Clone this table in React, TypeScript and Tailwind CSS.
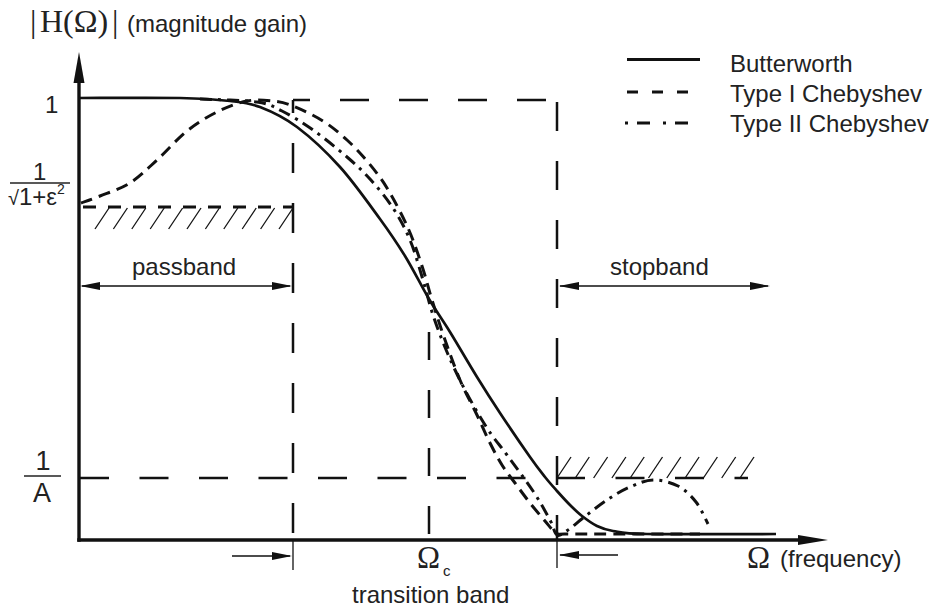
import React from 'react';

type Pt = [number, number];

// Catmull-Rom through the points, as cubic beziers
const smooth = (pts: Pt[]) => {
  let d = `M${pts[0][0]},${pts[0][1]}`;
  for (let i = 0; i < pts.length - 1; i++) {
    const p0 = pts[i - 1] || pts[i];
    const p1 = pts[i];
    const p2 = pts[i + 1];
    const p3 = pts[i + 2] || p2;
    const c1x = p1[0] + (p2[0] - p0[0]) / 6;
    const c1y = p1[1] + (p2[1] - p0[1]) / 6;
    const c2x = p2[0] - (p3[0] - p1[0]) / 6;
    const c2y = p2[1] - (p3[1] - p1[1]) / 6;
    d += ` C${c1x.toFixed(1)},${c1y.toFixed(1)} ${c2x.toFixed(1)},${c2y.toFixed(1)} ${p2[0]},${p2[1]}`;
  }
  return d;
};

const butterworth: Pt[] = [
  [79, 98], [180, 98], [230, 101], [260, 107], [297, 127], [340, 167], [380, 219],
  [405, 256], [429, 299], [450, 332], [477, 377], [500, 413], [530, 457], [545, 477],
  [557, 491], [570, 505], [582, 516], [597, 526], [613, 531], [647, 534], [776, 534],
];

const chebyshev1: Pt[] = [
  [81, 203], [100, 196], [130, 183], [157, 160], [187, 131], [217, 112], [247, 101],
  [273, 101], [293, 106], [323, 121], [347, 140], [367, 161], [387, 188], [408, 228],
  [422, 266], [432, 300], [444, 337], [460, 380], [477, 415], [490, 443], [502, 465],
  [515, 483], [530, 503], [545, 521], [556, 533], [566, 534], [613, 534], [700, 534],
];

const chebyshev2: Pt[] = [
  [200, 99], [257, 102], [282, 111], [313, 130], [347, 157], [370, 179], [393, 208],
  [410, 240], [423, 280], [433, 315], [447, 352], [465, 390], [487, 428], [507, 455],
  [533, 491], [550, 520], [557, 535], [568, 530], [583, 518], [607, 500], [630, 487],
  [653, 480], [678, 486], [696, 502], [708, 524],
];

const ink = '#111';
const text = '#222';
const sans = '"Liberation Sans", Arial, sans-serif';
const serif = '"Liberation Serif", "Times New Roman", serif';

const head = (tx: number, ty: number, dir: 1 | -1) =>
  `${tx},${ty} ${tx - dir * 20},${ty - 4} ${tx - dir * 20},${ty + 4}`;

const passHatch = Array.from({ length: 11 }, (_, i) => 95 + i * 18.4);
const stopHatch = Array.from({ length: 11 }, (_, i) => 557 + i * 18.3);

const App: React.FC = () => {
  return (
    <div className="w-[937px] h-[610px] bg-white overflow-hidden">
      <svg width={937} height={610} viewBox="0 0 937 610" className="block">
        {/* reference lines */}
        <g stroke={ink} strokeWidth={2.5} fill="none">
          <line x1={293} y1={100} x2={557} y2={100} strokeDasharray="29 30" strokeDashoffset={12} />
          <line x1={293} y1={100} x2={293} y2={540} strokeDasharray="30 30" strokeDashoffset={17} />
          <line x1={557} y1={102} x2={557} y2={540} strokeDasharray="29 30" />
          <line x1={429} y1={332} x2={429} y2={540} strokeDasharray="28 30" />
          <line x1={80} y1={478} x2={748} y2={478} strokeDasharray="29 30.5" />
          <line x1={83} y1={207} x2={293} y2={207} strokeWidth={3} strokeDasharray="13 12" />
        </g>

        {/* hatching */}
        <g stroke={ink} strokeWidth={1.3}>
          {passHatch.map((x) => (
            <line key={x} x1={x} y1={229} x2={x + 14} y2={208} />
          ))}
          {stopHatch.map((x) => (
            <line key={x} x1={x} y1={478} x2={x + 14} y2={457} />
          ))}
        </g>

        {/* response curves */}
        <g fill="none" stroke={ink} strokeWidth={3}>
          <path d={smooth(chebyshev2)} strokeDasharray="12 6 3 6" />
          <path d={smooth(chebyshev1)} strokeDasharray="12 7" />
          <path d={smooth(butterworth)} strokeWidth={2.7} />
        </g>

        {/* axes */}
        <line x1={79} y1={80} x2={79} y2={541.7} stroke={ink} strokeWidth={3.4} />
        <line x1={77.3} y1={540} x2={802} y2={540} stroke={ink} strokeWidth={3.4} />
        <polygon points="79,52 73.5,83 84.5,83" fill={ink} />
        <polygon points="828,540 798,535 798,545" fill={ink} />

        {/* dimension arrows */}
        <g stroke={ink} strokeWidth={1.3}>
          <line x1={82} y1={286} x2={290} y2={286} />
          <line x1={560} y1={286} x2={768} y2={286} />
          <line x1={232} y1={556} x2={290} y2={556} />
          <line x1={560} y1={555} x2={618} y2={555} />
          <line x1={293} y1={540} x2={293} y2={570} />
          <line x1={557} y1={540} x2={557} y2={568} />
        </g>
        <g fill={ink}>
          <polygon points={head(80, 286, -1)} />
          <polygon points={head(292, 286, 1)} />
          <polygon points={head(559, 286, -1)} />
          <polygon points={head(770, 286, 1)} />
          <polygon points={head(292, 556, 1)} />
          <polygon points={head(559, 555, -1)} />
        </g>

        {/* legend */}
        <g stroke={ink} strokeWidth={3}>
          <line x1={627} y1={59.5} x2={700} y2={59.5} />
          <line x1={627} y1={92} x2={690} y2={92} strokeDasharray="11 14" />
          <line x1={625} y1={123} x2={690} y2={123} strokeDasharray="3 9 13 13" />
        </g>

        <g fill={text} fontFamily={sans} fontSize={24}>
          <text x={730} y={72}>Butterworth</text>
          <text x={730} y={102}>Type I Chebyshev</text>
          <text x={730} y={132}>Type II Chebyshev</text>

          <text x={127} y={32}>(magnitude gain)</text>
          <text x={132} y={275}>passband</text>
          <text x={610} y={275}>stopband</text>
          <text x={352} y={603}>transition band</text>
          <text x={780} y={567}>(frequency)</text>

          <text x={45} y={113}>1</text>
          <text x={33} y={180}>1</text>
          <text x={8} y={205}>
            <tspan fontSize={20}>√</tspan>
            <tspan>1+ε</tspan>
            <tspan fontSize={14} dy={-11}>2</tspan>
          </text>
          <text x={43} y={470} fontSize={27} textAnchor="middle">1</text>
          <text x={42} y={502} fontSize={27} textAnchor="middle">A</text>
          <text x={443} y={576} fontSize={15}>c</text>
        </g>

        <g fill={text} fontFamily={serif}>
          <text x={30} y={32} fontSize={32}>|</text>
          <text x={40} y={32} fontSize={32}>H(Ω)</text>
          <text x={112} y={32} fontSize={32}>|</text>
          <text x={417} y={568} fontSize={31}>Ω</text>
          <text x={747} y={568} fontSize={31}>Ω</text>
        </g>

        {/* fraction bars */}
        <g stroke={text} strokeWidth={1.4}>
          <line x1={10} y1={183} x2={70} y2={183} />
          <line x1={24} y1={476} x2={61} y2={476} />
        </g>
      </svg>
    </div>
  );
};

export default App;
